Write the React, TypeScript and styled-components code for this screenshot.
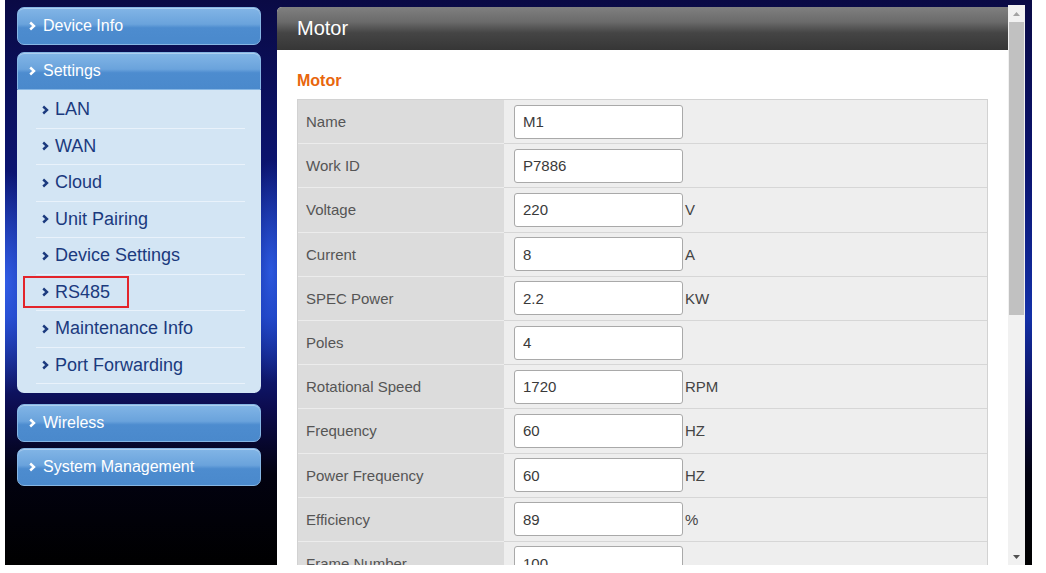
import React from 'react';
import styled, { createGlobalStyle } from 'styled-components';

const GlobalStyle = createGlobalStyle`
  html, body {
    margin: 0;
    padding: 0;
    background: #ffffff;
  }
  body {
    font-family: "Liberation Sans", Arial, sans-serif;
  }
`;

const Frame = styled.div`
  margin-left: 5px;
  width: 1027px;
  height: 565px;
  overflow: hidden;
  display: flex;
  box-sizing: border-box;
  padding: 7px 7px 0 12px;
  background:
    radial-gradient(ellipse 60px 160px at 0% 50%, rgba(60, 110, 255, 0.75), transparent 70%),
    radial-gradient(ellipse 40px 160px at 266px 48%, rgba(50, 100, 240, 0.8), transparent 70%),
    linear-gradient(to bottom, #0a0a45 0%, #0b1470 30%, #1330a8 56%, #0c0c50 72%, #020210 84%, #000 100%);
`;

const Sidebar = styled.nav`
  width: 244px;
  flex-shrink: 0;
  display: flex;
  flex-direction: column;
`;

const MenuButton = styled.div<{ $open?: boolean }>`
  height: 38px;
  display: flex;
  align-items: center;
  gap: 7px;
  padding-left: 11px;
  padding-bottom: 1px;
  box-sizing: border-box;
  color: #ffffff;
  font-size: 16px;
  border: 1px solid #86b6e4;
  border-radius: ${(p) => (p.$open ? '7px 7px 0 0' : '7px')};
  background: linear-gradient(to bottom, #82b5e6 0%, #6aa3dc 45%, #4d8ccf 55%, #4a89cc 100%);
  box-shadow: inset 0 1px 0 rgba(255, 255, 255, 0.35);
`;

const Group = styled.div<{ $gap: number }>`
  margin-bottom: ${(p) => p.$gap}px;
`;

const SubMenu = styled.ul`
  list-style: none;
  margin: 0;
  padding: 2px 0 9px;
  background: #d3e5f4;
  border-radius: 0 0 7px 7px;
`;

const SubItem = styled.li`
  position: relative;
  height: 36.5px;
  margin: 0 16px 0 19px;
  padding-left: 6px;
  display: flex;
  align-items: center;
  gap: 6px;
  box-sizing: border-box;
  border-bottom: 1px solid #e9f2fb;
  color: #1b3a7e;
  font-size: 18px;
`;

const Highlight = styled.span`
  position: absolute;
  left: -13px;
  top: 1px;
  width: 106px;
  height: 32px;
  box-sizing: border-box;
  border: 2px solid #e3242b;
`;

const Panel = styled.main`
  margin-left: 16px;
  width: 731px;
  flex-shrink: 0;
  display: flex;
  flex-direction: column;
  background: #ffffff;
  border-radius: 5px 0 0 0;
  overflow: hidden;
`;

const TitleBar = styled.header`
  height: 43px;
  flex-shrink: 0;
  display: flex;
  align-items: center;
  padding-left: 20px;
  color: #ffffff;
  font-size: 20px;
  background: linear-gradient(to bottom, #808080 0%, #6a6a6a 35%, #454545 60%, #363636 100%);
`;

const Body = styled.section`
  padding: 21px 20px 0;
`;

const Heading = styled.h2`
  margin: 0 0 9px;
  color: #e8660d;
  font-size: 16px;
  font-weight: bold;
  line-height: 19px;
`;

const Table = styled.div`
  display: grid;
  grid-template-columns: 206px 1fr;
  border: 1px solid #d2d2d2;
`;

const LabelCell = styled.div`
  height: 44.2px;
  box-sizing: border-box;
  display: flex;
  align-items: center;
  padding-left: 8px;
  background: #dcdcdc;
  border-bottom: 1px solid #ececec;
  color: #555555;
  font-size: 15px;
`;

const ValueCell = styled.div`
  height: 44.2px;
  box-sizing: border-box;
  display: flex;
  align-items: center;
  gap: 2px;
  padding-left: 10px;
  background: #eeeeee;
  border-bottom: 1px solid #d6d6d6;
  color: #444444;
  font-size: 15px;
`;

const Input = styled.input`
  width: 169px;
  height: 34px;
  box-sizing: border-box;
  padding: 0 8px;
  border: 1px solid #a9a9a9;
  border-radius: 3px;
  background: #ffffff;
  color: #3a3a3a;
  font-family: "Liberation Sans", Arial, sans-serif;
  font-size: 15px;
`;

const Scrollbar = styled.div`
  width: 17px;
  flex-shrink: 0;
  margin-top: -2px;
  display: flex;
  flex-direction: column;
  background: #f1f1f1;
`;

const ScrollArrow = styled.div`
  height: 17px;
  display: flex;
  align-items: center;
  justify-content: center;
  flex-shrink: 0;
`;

const Thumb = styled.div`
  height: 293px;
  margin: 0 1px;
  background: #c1c1c1;
`;

const Track = styled.div`
  flex: 1;
`;

const Chevron = ({ color }: { color: string }) => (
  <svg width="7" height="10" viewBox="0 0 7 10">
    <path d="M1.2 1.5 L5 5 L1.2 8.5" fill="none" stroke={color} strokeWidth="2.4" />
  </svg>
);

const subItems = [
  'LAN',
  'WAN',
  'Cloud',
  'Unit Pairing',
  'Device Settings',
  'RS485',
  'Maintenance Info',
  'Port Forwarding',
];

const rows: [string, string, string][] = [
  ['Name', 'M1', ''],
  ['Work ID', 'P7886', ''],
  ['Voltage', '220', 'V'],
  ['Current', '8', 'A'],
  ['SPEC Power', '2.2', 'KW'],
  ['Poles', '4', ''],
  ['Rotational Speed', '1720', 'RPM'],
  ['Frequency', '60', 'HZ'],
  ['Power Frequency', '60', 'HZ'],
  ['Efficiency', '89', '%'],
  ['Frame Number', '100', ''],
];

const App = () => {
  return (
    <>
      <GlobalStyle />
      <Frame>
        <Sidebar>
          <Group $gap={7}>
            <MenuButton>
              <Chevron color="#ffffff" />
              Device Info
            </MenuButton>
          </Group>
          <Group $gap={11}>
            <MenuButton $open>
              <Chevron color="#ffffff" />
              Settings
            </MenuButton>
            <SubMenu>
              {subItems.map((item) => (
                <SubItem key={item}>
                  {item === 'RS485' && <Highlight />}
                  <Chevron color="#1b3a7e" />
                  {item}
                </SubItem>
              ))}
            </SubMenu>
          </Group>
          <Group $gap={6}>
            <MenuButton>
              <Chevron color="#ffffff" />
              Wireless
            </MenuButton>
          </Group>
          <Group $gap={0}>
            <MenuButton>
              <Chevron color="#ffffff" />
              System Management
            </MenuButton>
          </Group>
        </Sidebar>

        <Panel>
          <TitleBar>Motor</TitleBar>
          <Body>
            <Heading>Motor</Heading>
            <Table>
              {rows.map(([label, value, unit]) => (
                <React.Fragment key={label}>
                  <LabelCell>{label}</LabelCell>
                  <ValueCell>
                    <Input defaultValue={value} />
                    {unit}
                  </ValueCell>
                </React.Fragment>
              ))}
            </Table>
          </Body>
        </Panel>

        <Scrollbar>
          <ScrollArrow>
            <svg width="7" height="4" viewBox="0 0 7 4">
              <path d="M0 4 L3.5 0 L7 4 Z" fill="#a3a3a3" />
            </svg>
          </ScrollArrow>
          <Thumb />
          <Track />
          <ScrollArrow>
            <svg width="7" height="4" viewBox="0 0 7 4">
              <path d="M0 0 L3.5 4 L7 0 Z" fill="#505050" />
            </svg>
          </ScrollArrow>
        </Scrollbar>
      </Frame>
    </>
  );
};

export default App;
